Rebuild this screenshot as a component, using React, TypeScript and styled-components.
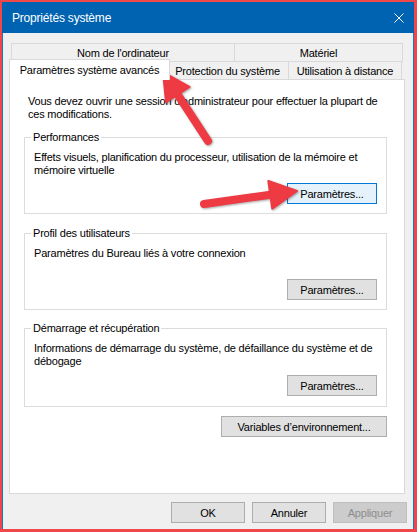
import React from "react";
import styled, { createGlobalStyle } from "styled-components";

const GlobalStyle = createGlobalStyle`
  html, body {
    margin: 0;
    padding: 0;
    background: #f04848;
  }
  body {
    font-family: "Liberation Sans", Arial, sans-serif;
  }
`;

const Frame = styled.div`
  position: relative;
  width: 417px;
  height: 532px;
  box-sizing: border-box;
  padding: 2px 3px 3px 2px;
  background: #f04848;
`;

const Window = styled.div`
  display: flex;
  flex-direction: column;
  height: 100%;
  background: #f0f0f0;
  font-family: "Liberation Sans", Arial, sans-serif;
  font-size: 11px;
  letter-spacing: -0.2px;
  color: #000;
`;

const TitleBar = styled.div`
  height: 31px;
  flex: 0 0 31px;
  display: flex;
  align-items: center;
  justify-content: space-between;
  padding: 1px 10px 0 10px;
  box-sizing: border-box;
  background: #0063b1;
  color: #fff;
  font-size: 12px;
`;

const Body = styled.div`
  flex: 1;
  display: flex;
  flex-direction: column;
  border-left: 1px solid #1c73c2;
  border-right: 1px solid #1c73c2;
  padding: 10px 0 0 6px;
`;

const TabControl = styled.div`
  display: flex;
  flex-direction: column;
  width: 396px;
`;

const TabRow = styled.div`
  display: flex;
  align-items: flex-start;
  height: 19px;
  padding: 0 2px;
  & + & {
    margin-top: -1px;
  }
`;

const Tab = styled.div<{ $w: number; $active?: boolean }>`
  flex: 0 0 ${p => p.$w}px;
  box-sizing: border-box;
  height: ${p => (p.$active ? 21 : 19)}px;
  display: flex;
  align-items: center;
  justify-content: center;
  white-space: nowrap;
  border: 1px solid #d9d9d9;
  background: ${p => (p.$active ? "#fff" : "#f0f0f0")};
  & + & {
    margin-left: -1px;
  }
  ${p =>
    p.$active &&
    `
    position: relative;
    z-index: 1;
    margin: -2px -3px 0 -2px;
    border-bottom: none;
    padding-bottom: 1px;
    & + & { margin-left: -3px; }
  `}
`;

const Panel = styled.div`
  margin-top: -1px;
  height: 415px;
  box-sizing: border-box;
  border: 1px solid #d9d9d9;
  background: #fff;
  padding-top: 15px;
  display: flex;
  flex-direction: column;
`;

const Intro = styled.p`
  margin: 0 0 0 18px;
  line-height: 13px;
`;

const Group = styled.fieldset<{ $top: number }>`
  margin: ${p => p.$top}px 17px 0 14px;
  padding: 0;
  border: 1px solid #dcdcdc;
  min-inline-size: 0;
`;

const Legend = styled.legend`
  margin-left: 6px;
  padding: 0 2px;
  line-height: 13px;
  font-size: 11px;
`;

const GroupInner = styled.div<{ $bottom: number }>`
  padding: 0 9px ${p => p.$bottom}px 9px;
`;

const Description = styled.div`
  margin-top: 7px;
  min-height: 26px;
  line-height: 13px;
`;

const ButtonRow = styled.div<{ $top: number }>`
  display: flex;
  justify-content: flex-end;
  margin-top: ${p => p.$top}px;
`;

const Button = styled.div<{ $w: number; $focus?: boolean; $disabled?: boolean }>`
  width: ${p => p.$w}px;
  height: 21px;
  box-sizing: border-box;
  display: flex;
  align-items: center;
  justify-content: center;
  white-space: nowrap;
  border: 1px solid ${p => (p.$focus ? "#0078d7" : p.$disabled ? "#bfbfbf" : "#adadad")};
  background: ${p => (p.$focus ? "#e5f1fb" : p.$disabled ? "#cccccc" : "#e1e1e1")};
  color: ${p => (p.$disabled ? "#8c8c8c" : "#000")};
`;

const EnvRow = styled.div`
  display: flex;
  justify-content: flex-end;
  margin: 9px 17px 0 0;
`;

const Footer = styled.div`
  display: flex;
  justify-content: flex-end;
  gap: 7px;
  margin-top: 8px;
  padding-right: 6px;
`;

const Overlay = styled.svg`
  position: absolute;
  left: 0;
  top: 0;
  pointer-events: none;
  filter: drop-shadow(1px 1px 1px rgba(0, 0, 0, 0.35));
`;

type Pt = [number, number];

const Arrow = ({ from, to }: { from: Pt; to: Pt }) => {
  const dx = to[0] - from[0];
  const dy = to[1] - from[1];
  const len = Math.hypot(dx, dy);
  const ux = dx / len;
  const uy = dy / len;
  const head = 27;
  const half = 14;
  const bx = to[0] - ux * head;
  const by = to[1] - uy * head;
  const px = -uy;
  const py = ux;
  const pts = [
    `${to[0]},${to[1]}`,
    `${bx + px * half},${by + py * half}`,
    `${bx - px * half},${by - py * half}`,
  ].join(" ");
  return (
    <g fill="#ee3a43" stroke="#ee3a43">
      <line x1={from[0]} y1={from[1]} x2={bx + ux * 2} y2={by + uy * 2} strokeWidth={8} strokeLinecap="round" />
      <polygon points={pts} strokeWidth={2} strokeLinejoin="round" />
    </g>
  );
};

const CloseIcon = () => (
  <svg width="10" height="10" viewBox="0 0 10 10">
    <path d="M0.5 0.5 L9.5 9.5 M9.5 0.5 L0.5 9.5" stroke="#fff" strokeWidth="1" />
  </svg>
);

export default function App() {
  return (
    <Frame>
      <GlobalStyle />
      <Window>
        <TitleBar>
          <span>Propriétés système</span>
          <CloseIcon />
        </TitleBar>
        <Body>
          <TabControl>
            <TabRow>
              <Tab $w={224}>Nom de l'ordinateur</Tab>
              <Tab $w={169}>Matériel</Tab>
            </TabRow>
            <TabRow>
              <Tab $w={161} $active>Paramètres système avancés</Tab>
              <Tab $w={123}>Protection du système</Tab>
              <Tab $w={114}>Utilisation à distance</Tab>
            </TabRow>
            <Panel>
              <Intro>
                Vous devez ouvrir une session d'administrateur pour effectuer la plupart de
                <br />
                ces modifications.
              </Intro>

              <Group $top={10}>
                <Legend>Performances</Legend>
                <GroupInner $bottom={9}>
                  <Description>
                    Effets visuels, planification du processeur, utilisation de la mémoire et
                    <br />
                    mémoire virtuelle
                  </Description>
                  <ButtonRow $top={6}>
                    <Button $w={90} $focus>Paramètres...</Button>
                  </ButtonRow>
                </GroupInner>
              </Group>

              <Group $top={13}>
                <Legend>Profil des utilisateurs</Legend>
                <GroupInner $bottom={9}>
                  <Description>Paramètres du Bureau liés à votre connexion</Description>
                  <ButtonRow $top={6}>
                    <Button $w={90}>Paramètres...</Button>
                  </ButtonRow>
                </GroupInner>
              </Group>

              <Group $top={12}>
                <Legend>Démarrage et récupération</Legend>
                <GroupInner $bottom={10}>
                  <Description>
                    Informations de démarrage du système, de défaillance du système et de
                    <br />
                    débogage
                  </Description>
                  <ButtonRow $top={7}>
                    <Button $w={90}>Paramètres...</Button>
                  </ButtonRow>
                </GroupInner>
              </Group>

              <EnvRow>
                <Button $w={166}>Variables d’environnement...</Button>
              </EnvRow>
            </Panel>
          </TabControl>
          <Footer>
            <Button $w={74}>OK</Button>
            <Button $w={74}>Annuler</Button>
            <Button $w={74} $disabled>Appliquer</Button>
          </Footer>
        </Body>
      </Window>
      <Overlay width={417} height={532} viewBox="0 0 417 532">
        <Arrow from={[208, 141]} to={[163, 72]} />
        <Arrow from={[204, 204]} to={[297, 191]} />
      </Overlay>
    </Frame>
  );
}
